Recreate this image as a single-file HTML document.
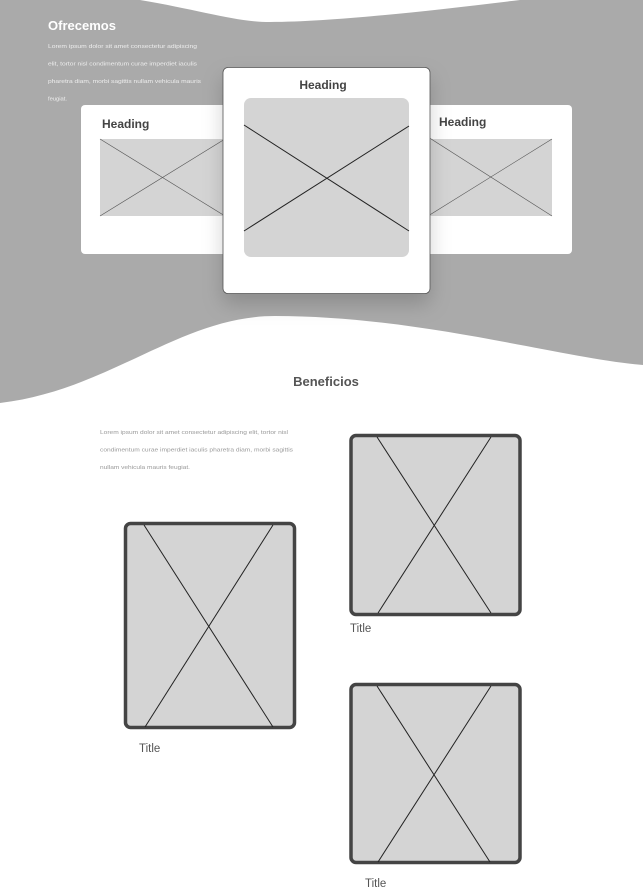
<!DOCTYPE html>
<html><head><meta charset="utf-8"><style>
html,body{margin:0;padding:0;background:#fff;width:643px;height:895px;overflow:hidden;font-family:"Liberation Sans",Arial,sans-serif}
</style></head><body>
<svg width="643" height="895" viewBox="0 0 643 895" xmlns="http://www.w3.org/2000/svg" style="display:block">
<defs>
<filter id="sh" x="-30%" y="-30%" width="160%" height="170%"><feDropShadow dx="0" dy="10" stdDeviation="10" flood-color="#000" flood-opacity="0.18"/></filter>
</defs>
<path d="M0,0 H140 C200,10 235,22 270,22 C330,22 420,12 520,0 H643 V365 C560,358 420,316 275,316 C180,316 110,390 0,403 Z" fill="#aaaaaa"/>
<text x="48" y="30" font-size="13" font-weight="bold" fill="#fff" font-family="Liberation Sans, sans-serif">Ofrecemos</text>
<g font-size="5.4" fill="#eeeeee" font-family="Liberation Sans, sans-serif">
<text x="48" y="48" textLength="149" lengthAdjust="spacingAndGlyphs">Lorem ipsum dolor sit amet consectetur adipiscing</text>
<text x="48" y="65.5" textLength="149" lengthAdjust="spacingAndGlyphs">elit, tortor nisl condimentum curae imperdiet iaculis</text>
<text x="48" y="83" textLength="153" lengthAdjust="spacingAndGlyphs">pharetra diam, morbi sagittis nullam vehicula mauris</text>
<text x="48" y="100.5" textLength="19" lengthAdjust="spacingAndGlyphs">feugiat.</text>
</g>
<rect x="81" y="105" width="150" height="149" rx="4" fill="#fff"/>
<rect x="422" y="105" width="150" height="149" rx="4" fill="#fff"/>
<text x="102" y="128" font-size="12" font-weight="bold" fill="#444">Heading</text>
<text x="439" y="126" font-size="12" font-weight="bold" fill="#444">Heading</text>
<rect x="100" y="139" width="125" height="77" fill="#d4d4d4"/>
<line x1="100" y1="139" x2="225" y2="216" stroke="#555" stroke-width="0.6"/>
<line x1="100" y1="216" x2="225" y2="139" stroke="#555" stroke-width="0.6"/>
<rect x="428" y="139" width="124" height="77" fill="#d4d4d4"/>
<line x1="428" y1="137" x2="552" y2="216" stroke="#555" stroke-width="0.6"/>
<line x1="428" y1="216" x2="552" y2="139" stroke="#555" stroke-width="0.6"/>
<rect x="223" y="67.5" width="207" height="226" rx="5" fill="#fff" stroke="#555" stroke-width="0.8" filter="url(#sh)"/>
<text x="323" y="89" text-anchor="middle" font-size="12" font-weight="bold" fill="#444">Heading</text>
<rect x="244" y="98" width="165" height="159" rx="7" fill="#d4d4d4"/>
<line x1="244" y1="125" x2="409" y2="231" stroke="#222" stroke-width="1"/>
<line x1="244" y1="231" x2="409" y2="126" stroke="#222" stroke-width="1"/>
<text x="326" y="386" text-anchor="middle" font-size="13" font-weight="bold" fill="#555">Beneficios</text>
<g font-size="5.4" fill="#999">
<text x="100" y="434" textLength="188" lengthAdjust="spacingAndGlyphs">Lorem ipsum dolor sit amet consectetur adipiscing elit, tortor nisl</text>
<text x="100" y="451.5" textLength="193" lengthAdjust="spacingAndGlyphs">condimentum curae imperdiet iaculis pharetra diam, morbi sagittis</text>
<text x="100" y="469" textLength="90" lengthAdjust="spacingAndGlyphs">nullam vehicula mauris feugiat.</text>
</g>
<g stroke="#222" stroke-width="1">
<rect x="351" y="435.5" width="169" height="179" rx="5" fill="#d4d4d4" stroke="#444" stroke-width="3.5"/>
<line x1="377" y1="437" x2="491" y2="613"/><line x1="491" y1="437" x2="378" y2="613"/>
<rect x="125.5" y="523.5" width="169" height="204" rx="5" fill="#d4d4d4" stroke="#444" stroke-width="3.5"/>
<line x1="144" y1="525" x2="273" y2="727"/><line x1="273" y1="525" x2="145" y2="727"/>
<rect x="351" y="684.5" width="169" height="178" rx="5" fill="#d4d4d4" stroke="#444" stroke-width="3.5"/>
<line x1="377" y1="686" x2="490" y2="862"/><line x1="491" y1="686" x2="378" y2="862"/>
</g>
<g font-size="11.5" fill="#555">
<text x="350" y="632">Title</text>
<text x="139" y="752">Title</text>
<text x="365" y="887">Title</text>
</g>
</svg>
</body></html>
